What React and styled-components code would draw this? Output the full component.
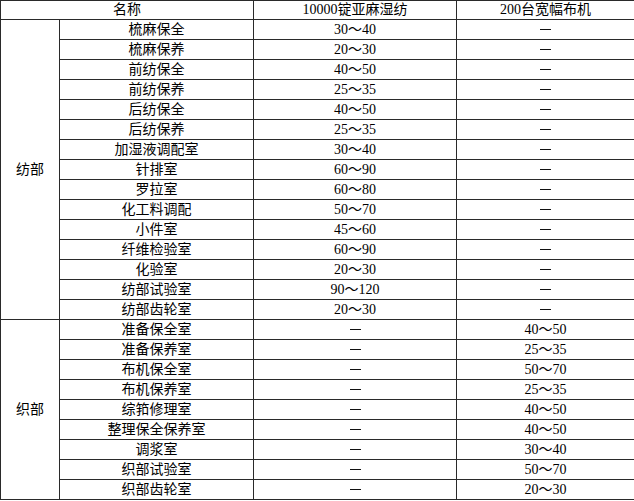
import React from "react";
import styled, { createGlobalStyle } from "styled-components";

const GlobalStyle = createGlobalStyle`
  html, body {
    margin: 0;
    padding: 0;
    background: #ffffff;
  }
  body {
    font-family: "Liberation Serif", "Noto Sans CJK SC", serif;
    color: #000000;
  }
`;

const Table = styled.table`
  width: 634px;
  border-collapse: collapse;
  table-layout: fixed;
  font-size: 14px;
`;

const Col = styled.col`
  width: ${(p) => p.w}px;
`;

const HeadCell = styled.th`
  height: 18px;
  padding: 0;
  line-height: 18px;
  font-weight: normal;
  text-align: center;
  border: 1px solid #2a2a2a;
  white-space: nowrap;
`;

const Cell = styled.td`
  height: 19px;
  padding: 0;
  line-height: 19px;
  text-align: center;
  vertical-align: middle;
  border: 1px solid #2a2a2a;
  white-space: nowrap;
`;

const Dash = styled.span`
  display: inline-block;
  width: 11px;
  height: 1px;
  background: #111;
  vertical-align: middle;
  margin-top: -3px;
`;

const spinning = [
  ["梳麻保全", "30～40"],
  ["梳麻保养", "20～30"],
  ["前纺保全", "40～50"],
  ["前纺保养", "25～35"],
  ["后纺保全", "40～50"],
  ["后纺保养", "25～35"],
  ["加湿液调配室", "30～40"],
  ["针排室", "60～90"],
  ["罗拉室", "60～80"],
  ["化工料调配", "50～70"],
  ["小件室", "45～60"],
  ["纤维检验室", "60～90"],
  ["化验室", "20～30"],
  ["纺部试验室", "90～120"],
  ["纺部齿轮室", "20～30"],
];

const weaving = [
  ["准备保全室", "40～50"],
  ["准备保养室", "25～35"],
  ["布机保全室", "50～70"],
  ["布机保养室", "25～35"],
  ["综筘修理室", "40～50"],
  ["整理保全保养室", "40～50"],
  ["调浆室", "30～40"],
  ["织部试验室", "50～70"],
  ["织部齿轮室", "20～30"],
];

const Value = ({ v }) => (v ? v : <Dash />);

export default function App() {
  return (
    <>
      <GlobalStyle />
      <Table>
        <colgroup>
          <Col w={59} />
          <Col w={194} />
          <Col w={203} />
          <Col w={178} />
        </colgroup>
        <thead>
          <tr>
            <HeadCell colSpan={2}>名称</HeadCell>
            <HeadCell>10000锭亚麻湿纺</HeadCell>
            <HeadCell>200台宽幅布机</HeadCell>
          </tr>
        </thead>
        <tbody>
          {spinning.map(([name, v], i) => (
            <tr key={name}>
              {i === 0 && <Cell rowSpan={spinning.length}>纺部</Cell>}
              <Cell>{name}</Cell>
              <Cell>
                <Value v={v} />
              </Cell>
              <Cell>
                <Value />
              </Cell>
            </tr>
          ))}
          {weaving.map(([name, v], i) => (
            <tr key={name}>
              {i === 0 && <Cell rowSpan={weaving.length}>织部</Cell>}
              <Cell>{name}</Cell>
              <Cell>
                <Value />
              </Cell>
              <Cell>
                <Value v={v} />
              </Cell>
            </tr>
          ))}
        </tbody>
      </Table>
    </>
  );
}
